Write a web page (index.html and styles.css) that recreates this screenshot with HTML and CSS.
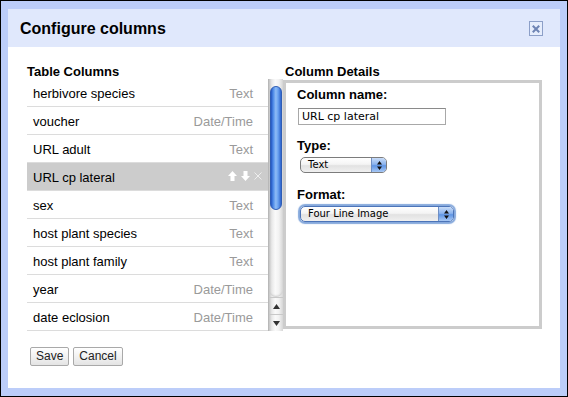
FILE: index.html
```html
<!DOCTYPE html>
<html>
<head>
<meta charset="utf-8">
<link rel="stylesheet" href="styles.css">
</head>
<body>
<div class="dialog">
  <div class="titlebar">
    <span class="title">Configure columns</span>
    <span class="close"><svg width="13" height="14" viewBox="0 0 13 14"><path d="M3 3.5 L10 10.5 M10 3.5 L3 10.5" stroke="#6e84b4" stroke-width="2.2" fill="none"/></svg></span>
  </div>
  <div class="content">
    <div class="columns">
      <div class="left">
        <div class="label">Table Columns</div>
        <div class="listwrap">
          <ul class="list">
            <li class="row"><span class="name">herbivore species</span><span class="type">Text</span></li>
            <li class="row"><span class="name">voucher</span><span class="type">Date/Time</span></li>
            <li class="row"><span class="name">URL adult</span><span class="type">Text</span></li>
            <li class="row selected"><span class="name">URL cp lateral</span>
              <span class="icons">
                <svg width="9" height="10" viewBox="0 0 9 10"><path d="M4.5 0 L9 5 H6.5 V10 H2.5 V5 H0 Z" fill="#fff"/></svg>
                <svg width="9" height="10" viewBox="0 0 9 10"><path d="M4.5 10 L9 5 H6.5 V0 H2.5 V5 H0 Z" fill="#fff"/></svg>
                <svg width="8" height="8" viewBox="0 0 8 8"><path d="M0.5 0.5 L7.5 7.5 M7.5 0.5 L0.5 7.5" stroke="#eeeeee" stroke-width="1" fill="none"/></svg>
              </span>
            </li>
            <li class="row"><span class="name">sex</span><span class="type">Text</span></li>
            <li class="row"><span class="name">host plant species</span><span class="type">Text</span></li>
            <li class="row"><span class="name">host plant family</span><span class="type">Text</span></li>
            <li class="row"><span class="name">year</span><span class="type">Date/Time</span></li>
            <li class="row"><span class="name">date eclosion</span><span class="type">Date/Time</span></li>
          </ul>
          <div class="scrollbar">
            <div class="sb-track">
              <div class="sb-thumb"></div>
            </div>
            <div class="sb-btn"><svg width="7" height="5" viewBox="0 0 7 5"><path d="M3.5 0 L7 5 H0 Z" fill="#333"/></svg></div>
            <div class="sb-btn sb-btn-down"><svg width="7" height="5" viewBox="0 0 7 5"><path d="M3.5 5 L7 0 H0 Z" fill="#333"/></svg></div>
          </div>
        </div>
      </div>
      <div class="right">
        <div class="label label-r">Column Details</div>
        <div class="panel">
          <div class="flabel">Column name:</div>
          <div class="input">URL cp lateral</div>
          <div class="flabel flabel-gap">Type:</div>
          <div class="select select-type"><span class="sel-text">Text</span><span class="sel-arrow"><svg width="5" height="9" viewBox="0 0 5 9"><path d="M2.5 0 L5 3.5 H0 Z M2.5 9 L5 5.5 H0 Z" fill="#111"/></svg></span></div>
          <div class="flabel flabel-gap2">Format:</div>
          <div class="select select-format focus"><span class="sel-text">Four Line Image</span><span class="sel-arrow"><svg width="5" height="9" viewBox="0 0 5 9"><path d="M2.5 0 L5 3.5 H0 Z M2.5 9 L5 5.5 H0 Z" fill="#111"/></svg></span></div>
        </div>
      </div>
    </div>
    <div class="buttons">
      <span class="btn">Save</span>
      <span class="btn">Cancel</span>
    </div>
  </div>
</div>
</body>
</html>
```

FILE: styles.css
```css
* { box-sizing: border-box; }
html, body { margin: 0; padding: 0; background: #fff; }
body { font-family: "Liberation Sans", Arial, sans-serif; }

.dialog {
  width: 568px;
  height: 397px;
  border: 1px solid #000;
  background: #bccdf9;
  padding: 8px 7px;
  display: flex;
  flex-direction: column;
}

.titlebar {
  height: 38px;
  background: #e0e8fc;
  display: flex;
  align-items: center;
  justify-content: space-between;
  padding: 0 17px 0 12px;
}
.title {
  font-size: 16px;
  font-weight: bold;
  color: #000;
  margin-top: 1px;
}
.close {
  width: 14px;
  height: 15px;
  border: 1px solid #8c9fc8;
  background: #e6edfc;
  display: flex;
  margin-top: 1px;
}
.close svg { display: block; margin: 0; }

.content {
  height: 341px;
  background: #fff;
  padding: 17px 0 0 19px;
}

.columns { display: flex; }
.left { width: 256px; }
.right { width: 259px; }

.label {
  font-size: 13px;
  font-weight: bold;
  line-height: 15px;
  height: 15px;
  color: #000;
}
.label-r { padding-left: 2px; }

.listwrap { display: flex; }
.list {
  list-style: none;
  margin: 0;
  padding: 0;
  width: 241px;
}
.row {
  height: 28px;
  border-bottom: 1px solid #dcdcdc;
  display: flex;
  align-items: center;
  justify-content: space-between;
  padding: 1px 15px 0 6px;
  font-size: 13px;
  color: #000;
}
.row.selected { background: #cccccc; padding-right: 6px; }
.type { color: #9a9a9a; }
.icons { display: flex; align-items: center; gap: 4px; margin-top: -3px; }
.icons svg { display: block; }

.scrollbar {
  width: 15px;
  height: 252px;
  display: flex;
  flex-direction: column;
  background: linear-gradient(to right, #c4c4c4 0%, #e8e8e8 20%, #fafafa 45%, #f2f2f2 70%, #d6d6d6 100%);
  border-left: 1px solid #b8b8b8;
}
.sb-track {
  flex: 1;
  padding: 7px 1px 0 1px;
  border-bottom-left-radius: 7px;
  border-bottom-right-radius: 7px;
  box-shadow: inset 0 -2px 2px -1px #c8c8c8;
}
.sb-thumb {
  height: 124px;
  border-radius: 7px;
  border: 1px solid #2f5db5;
  background: linear-gradient(to right, #2456c0 0%, #4d8ae8 22%, #8fbcf6 48%, #6aa2f0 70%, #2e64cc 100%);
}
.sb-btn {
  height: 17px;
  display: flex;
  align-items: center;
  justify-content: center;
  border-top: 1px solid #c8c8c8;
}
.sb-btn svg { display: block; }

.panel {
  margin-top: 1px;
  height: 249px;
  border: 3px solid #cccccc;
  padding: 4px 0 0 11px;
}
.flabel {
  font-size: 13px;
  font-weight: bold;
  line-height: 15px;
  color: #000;
}
.flabel-gap { margin-top: 13px; }
.flabel-gap2 { margin-top: 14px; }

.input {
  margin: 6px 0 0 1px;
  width: 148px;
  height: 17px;
  border: 1px solid #a8a8a8;
  border-top-color: #8a8a8a;
  font-family: "DejaVu Sans", sans-serif;
  font-size: 11px;
  line-height: 15px;
  padding-left: 3px;
  color: #000;
}

.select {
  margin: 4px 0 0 3px;
  height: 16px;
  display: flex;
  align-items: stretch;
  border: 1px solid #7c7c7c;
  border-radius: 5px;
  overflow: hidden;
  background: linear-gradient(#ffffff 0%, #f4f4f4 45%, #e2e2e2 55%, #f0f0f0 100%);
  font-family: "DejaVu Sans", sans-serif;
  font-size: 10px;
  color: #000;
}
.select-type { width: 87px; margin-top: 4px; }
.select-format { width: 154px; }
.select.focus { box-shadow: 0 0 1px 2px #86a9dc; border-color: #4c74b8; }
.sel-text { flex: 1; padding-left: 7px; line-height: 14px; }
.sel-arrow {
  width: 15px;
  display: flex;
  align-items: center;
  justify-content: center;
  border-left: 1px solid #6f8fc4;
  background: linear-gradient(#c8dcf8 0%, #8cb4ee 45%, #5f95e4 55%, #a8c8f4 100%);
}
.sel-arrow svg { display: block; }

.buttons {
  display: flex;
  gap: 4px;
  margin: 16px 0 0 3px;
}
.btn {
  height: 19px;
  padding: 0 5px;
  border: 1px solid #a9a9a9;
  border-radius: 2px;
  background: linear-gradient(#ffffff, #e4e4e4);
  font-size: 12px;
  line-height: 17px;
  color: #222;
}
```
